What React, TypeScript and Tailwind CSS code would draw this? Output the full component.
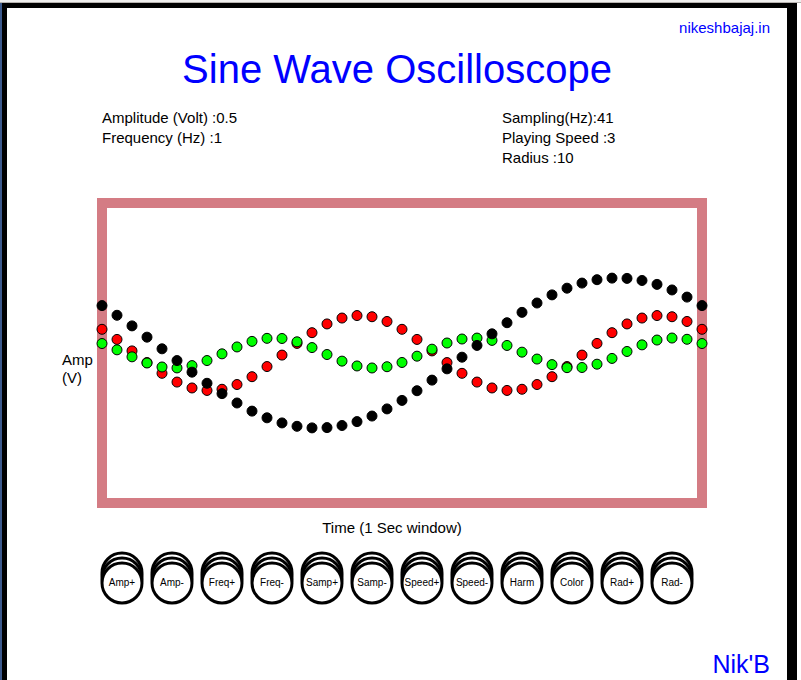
const SAMPLES = 41;
const PHASE = (50.8 * Math.PI) / 180;

const WAVES = [
  { harmonic: 2, amplitude: 37.5, color: '#ff0000' },
  { harmonic: 3, amplitude: 15, color: '#00ff00' },
  { harmonic: 1, amplitude: 75, color: '#000000' },
];

const CONTROLS = [
  'Amp+', 'Amp-', 'Freq+', 'Freq-', 'Samp+', 'Samp-',
  'Speed+', 'Speed-', 'Harm', 'Color', 'Rad+', 'Rad-',
];

function Scope() {
  return (
    <svg viewBox="0 0 610 310" className="block h-auto w-full overflow-visible" role="img" aria-label="Sine waves">
      <rect x="5" y="5" width="600" height="300" fill="#ffffff" stroke="#d47c84" strokeWidth="10" />
      {WAVES.map((wave) =>
        Array.from({ length: SAMPLES }, (_, i) => {
          const t = i / (SAMPLES - 1);
          const y = 155 - wave.amplitude * Math.cos(2 * Math.PI * wave.harmonic * t + PHASE);
          return (
            <circle
              key={`${wave.harmonic}-${i}`}
              cx={5 + 600 * t}
              cy={y}
              r="5"
              fill={wave.color}
              stroke="#000000"
            />
          );
        }),
      )}
    </svg>
  );
}

function Knob({ label }: { label: string }) {
  return (
    <button type="button" className="grid h-[54px] w-11 cursor-pointer place-items-center">
      <svg viewBox="0 0 44 54" className="col-start-1 row-start-1 h-[54px] w-11" aria-hidden="true">
        {[22, 27, 32].map((cy) => (
          <circle key={cy} cx="22" cy={cy} r="20" fill="#ffffff" stroke="#000000" strokeWidth="3" />
        ))}
      </svg>
      <span className="col-start-1 row-start-1 flex w-11 justify-center pt-2.5 text-[10px] leading-3 whitespace-nowrap">
        {label}
      </span>
    </button>
  );
}

export default function App() {
  return (
    <div className="flex min-h-screen flex-col bg-white font-['Liberation_Sans',Arial,sans-serif] text-[15px] leading-5 text-black">
      <div className="h-[3px] border-b border-[#b5b1ae] bg-[#efeeed]" />
      <div className="flex flex-1 border-l-2 border-[#3d5a8c] pr-1">
        <main className="flex flex-1 flex-col border-t-5 border-r-10 border-l-5 border-black bg-white">
          <header>
            <div className="flex justify-end pt-2.5 pr-[17px]">
              <a href="#home" className="text-[#0000ff]">nikeshbajaj.in</a>
            </div>
            <h1 className="mt-2 text-center text-[40px] leading-[46px] text-[#0000ff]">
              Sine Wave Oscilloscope
            </h1>
          </header>

          <section className="mt-4 grid grid-cols-[400px_1fr] pl-[95px]">
            <div>
              <p>Amplitude (Volt) :0.5</p>
              <p>Frequency (Hz) :1</p>
            </div>
            <div>
              <p>Sampling(Hz):41</p>
              <p>Playing Speed :3</p>
              <p>Radius :10</p>
            </div>
          </section>

          <section className="mt-[30px] flex pr-20">
            <div className="flex w-[90px] shrink-0 flex-col justify-center pt-8 pl-[55px] leading-[18px]">
              <span>Amp</span>
              <span>(V)</span>
            </div>
            <div className="min-w-0 flex-1">
              <Scope />
            </div>
          </section>
          <p className="mt-2.5 pr-2.5 text-center">Time (1 Sec window)</p>

          <div className="mt-[13px] flex flex-wrap justify-between px-[93px]">
            {CONTROLS.map((label) => (
              <Knob key={label} label={label} />
            ))}
          </div>

          <footer className="mt-auto flex justify-end pr-[17px] pb-px text-[25px] leading-[30px] text-[#0000ff]">
            Nik&apos;B
          </footer>
        </main>
      </div>
    </div>
  );
}
